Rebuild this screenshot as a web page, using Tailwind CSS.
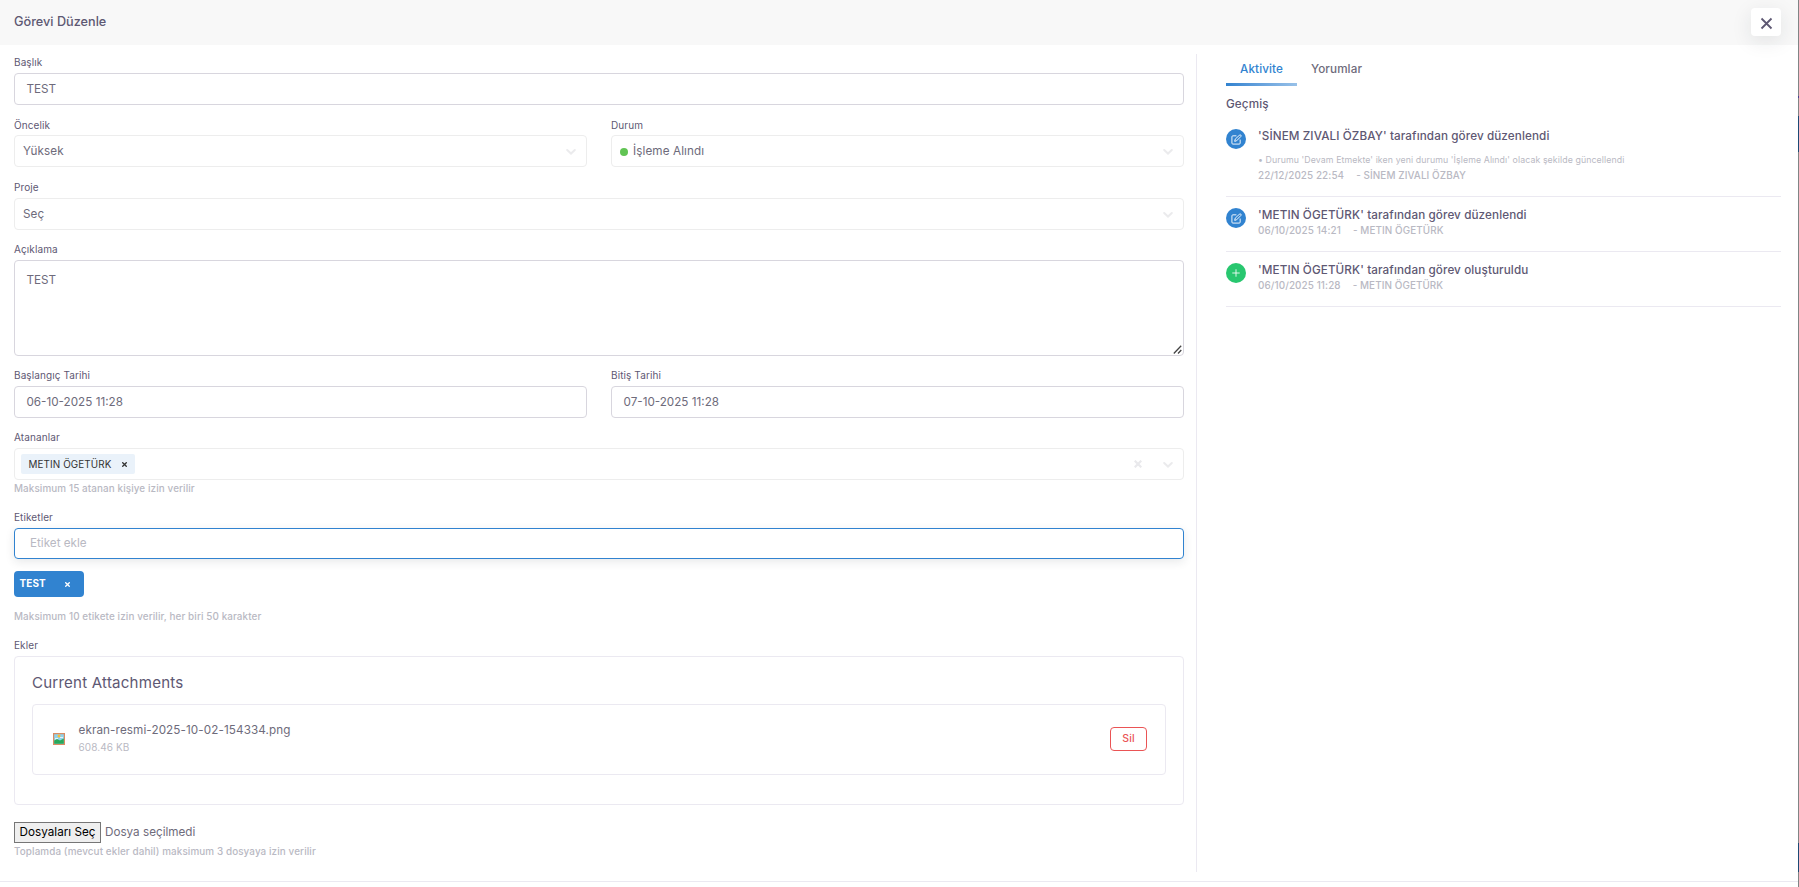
<!DOCTYPE html>
<html lang="tr">
    <head>
        <meta charset="UTF-8">
        <title>Görevi Düzenle</title>
        <script src="https://cdn.jsdelivr.net/npm/@tailwindcss/browser@4"></script>
    </head>
    <body class="flex h-[887px] overflow-hidden bg-white font-['Inter',sans-serif] text-[11.7px] tracking-[0.1px] text-[#6e6b7b]">

        <div id="modal" class="flex h-full flex-1 flex-col">

            <header class="flex h-[45px] shrink-0 items-start justify-between bg-[#f8f8f8] pl-3.5 pr-[17px]">
                <h5 class="pt-[11.5px] text-[12.7px] leading-5 font-medium tracking-normal text-[#5e5873]">Görevi Düzenle</h5>
                <button class="mt-2 flex h-7 w-[30px] items-center justify-center rounded-[4px] bg-white shadow-[0_5px_20px_0_rgba(34,41,47,0.1)]">
                    <svg class="mt-0.5 h-[13px] w-[13px]" viewBox="0 0 13 13" fill="none" stroke="#5e5873" stroke-width="1.8"><path d="M1.5 1.5l10 10M11.5 1.5l-10 10"/></svg>
                </button>
            </header>

            <main class="flex h-[837px] shrink-0 border-b border-[#ebe9f1] pt-[9px] pb-[9px]">

                <form id="form" class="w-[1197px] border-r border-[#ebe9f1] pr-3 pl-3.5">
                    <label class="block h-[19px] text-[10px] leading-[17px] text-[#5e5873]">Başlık</label>
                    <div class="flex h-8 items-center rounded-[4px] border border-[#d8d6de] px-[11.5px] pt-0.5 tracking-normal">TEST</div>

                    <div class="mt-3 grid grid-cols-2 gap-6">
                        <div>
                            <label class="block h-[18px] text-[10px] leading-[17px] text-[#5e5873]">Öncelik</label>
                            <div class="flex h-8 items-center justify-between rounded-[4px] border border-[#ededed] pt-0.5 pr-2.5 pl-2">
                                <span>Yüksek</span>
                                <svg class="-mt-px h-2.5 w-2.5" viewBox="0 0 10 10" fill="none" stroke="#ebebed" stroke-width="2" stroke-linecap="round"><path d="M1.200 3L5 6.600 8.800 3"/></svg>
                            </div>
                        </div>
                        <div>
                            <label class="block h-[18px] text-[10px] leading-[17px] text-[#5e5873]">Durum</label>
                            <div class="flex h-8 items-center rounded-[4px] border border-[#ededed] pt-0.5 pr-2.5 pl-2">
                                <span class="-mt-px mr-[5px] h-2 w-2 rounded-full bg-[#61c454]"></span>
                                <span class="flex-1">İşleme Alındı</span>
                                <svg class="-mt-px h-2.5 w-2.5" viewBox="0 0 10 10" fill="none" stroke="#ebebed" stroke-width="2" stroke-linecap="round"><path d="M1.200 3L5 6.600 8.800 3"/></svg>
                            </div>
                        </div>
                    </div>

                    <label class="mt-3 block h-[19px] text-[10px] leading-[17px] text-[#5e5873]">Proje</label>
                    <div class="flex h-8 items-center justify-between rounded-[4px] border border-[#ededed] pt-0.5 pr-2.5 pl-2">
                        <span>Seç</span>
                        <svg class="-mt-px h-2.5 w-2.5" viewBox="0 0 10 10" fill="none" stroke="#ebebed" stroke-width="2" stroke-linecap="round"><path d="M1.200 3L5 6.600 8.800 3"/></svg>
                    </div>

                    <label class="mt-3 block h-[18px] text-[10px] leading-[15px] text-[#5e5873]">Açıklama</label>
                    <div class="relative">
                        <textarea class="block h-24 w-full resize-none rounded-[4px] border border-[#d8d6de] px-[11.5px] py-[11px] leading-[17px] tracking-normal">TEST</textarea>
                        <svg class="absolute right-[2px] bottom-[2px] h-[9px] w-[9px]" viewBox="0 0 9 9" stroke="#444" stroke-width="1.3"><path d="M.8 8.500L8.200.8M5 8.500l3.300-3.500"/></svg>
                    </div>

                    <div class="mt-3 grid grid-cols-2 gap-6">
                        <div>
                            <label class="block h-[18px] text-[10px] leading-[15px] text-[#5e5873]">Başlangıç Tarihi</label>
                            <div class="flex h-8 items-center rounded-[4px] border border-[#d8d6de] px-[11.5px] pt-0.5 tracking-normal">06-10-2025 11:28</div>
                        </div>
                        <div>
                            <label class="block h-[18px] text-[10px] leading-[15px] text-[#5e5873]">Bitiş Tarihi</label>
                            <div class="flex h-8 items-center rounded-[4px] border border-[#d8d6de] px-[11.5px] pt-0.5 tracking-normal">07-10-2025 11:28</div>
                        </div>
                    </div>

                    <label class="mt-3 block h-[18px] text-[10px] leading-[15px] text-[#5e5873]">Atananlar</label>
                    <div class="flex h-8 items-center rounded-[4px] border border-[#ededed] pr-2.5 pl-1.5">
                        <div class="flex h-5 w-[114px] items-center rounded-[2px] bg-[#eaf2fa] pt-px pl-[7.5px] text-[9.9px] text-[#333]">
                            METIN ÖGETÜRK
                            <svg class="mb-px ml-[10.5px] h-[5px] w-[5px]" viewBox="0 0 5 5" stroke="#333" stroke-width="1.3"><path d="M.3.3l4.400 4.400M4.700.3L.3 4.700"/></svg>
                        </div>
                        <svg class="mr-[21px] ml-auto h-2 w-2" viewBox="0 0 8 8" stroke="#e9e9ec" stroke-width="2.2"><path d="M.7.7l6.600 6.600M7.300.7L.7 7.300"/></svg>
                        <svg class="mt-px h-2.5 w-2.5" viewBox="0 0 10 10" fill="none" stroke="#ebebed" stroke-width="2" stroke-linecap="round"><path d="M1.200 3L5 6.600 8.800 3"/></svg>
                    </div>
                    <small class="block h-[17px] text-[9.9px] leading-[17px] font-medium text-[#b9b9c3]">Maksimum 15 atanan kişiye izin verilir</small>

                    <label class="mt-3 block h-[19px] text-[10px] leading-[17px] text-[#5e5873]">Etiketler</label>
                    <div class="flex h-[31px] items-center rounded-[4px] border border-[#3183d0] px-[15px] pt-px tracking-normal text-[#b9b9c3] shadow-[0_3px_10px_0_rgba(34,41,47,0.1)]">Etiket ekle</div>
                    <div class="mt-3 flex h-[26px] w-[70px] items-center rounded-[4px] bg-[#3183d0] px-[5.5px] pb-px text-[10px] font-bold text-white">
                        TEST
                        <svg class="mt-px ml-[19.5px] h-[5px] w-[5px]" viewBox="0 0 5 5" stroke="#fff" stroke-width="1.3"><path d="M.3.3l4.400 4.400M4.700.3L.3 4.700"/></svg>
                    </div>
                    <small class="mt-[11px] block h-[17px] text-[9.9px] leading-[17px] font-medium text-[#b9b9c3]">Maksimum 10 etikete izin verilir, her biri 50 karakter</small>

                    <label class="mt-3 block h-[19px] text-[10px] leading-[17px] text-[#5e5873]">Ekler</label>
                    <div class="h-[149px] rounded-[4px] border border-[#ebe9f1] px-[17px]">
                        <h4 class="pt-4 text-[15.1px] leading-[19px] tracking-[0.2px] text-[#5e5873]">Current Attachments</h4>
                        <div class="mt-3 flex h-[71px] items-center rounded-[4px] border border-[#ebe9f1] pr-[18px] pl-5">
                            <svg class="-mt-px h-3 w-3" viewBox="0 0 12 12"><path fill="#d98c63" d="M0 0h12v12H0z"/><path fill="#8fd3ee" d="M1.200 1.200h9.600v9.600H1.200z"/><circle cx="6" cy="3" r="1.500" fill="#f6bd3a"/><path fill="#e5f4f8" d="M2 5h3v1.500H2zM7 4h3v1H7z"/><path fill="#29a95b" d="M1.200 10.800V7.400L4 6l3 1.500 3.800-2v5.300z"/></svg>
                            <div class="ml-[13.5px] flex-1">
                                <div class="-mt-0.5 leading-[18px]">ekran-resmi-2025-10-02-154334.png</div>
                                <small class="block text-[10px] leading-[17px] text-[#b9b9c3]">608.46 KB</small>
                            </div>
                            <button type="button" class="-mt-0.5 h-6 w-[37px] rounded-[4px] border border-[#ea5455] pt-px text-[10.5px] font-medium text-[#ea5455]">Sil</button>
                        </div>
                    </div>

                    <div class="mt-[17px] flex h-[21px] items-center tracking-normal">
                        <button type="button" class="h-[21px] w-[87px] border border-[#767676] bg-[#efefef] pt-px whitespace-nowrap text-black">Dosyaları Seç</button>
                        <span class="ml-1 pt-px">Dosya seçilmedi</span>
                    </div>
                    <small class="block h-[17px] text-[9.9px] leading-[17px] font-medium text-[#b9b9c3]">Toplamda (mevcut ekler dahil) maksimum 3 dosyaya izin verilir</small>
                </form>

                <aside class="flex-1 pr-[17px] pl-[29px]">
                    <nav class="flex leading-[30px] font-medium">
                        <a class="relative h-8 w-[71px] text-center text-[#3183d0]">Aktivite<span class="absolute bottom-0 left-0 h-[3px] w-full bg-linear-to-r from-[#3183d0] to-[#98c1e8]"></span></a>
                        <a class="ml-3.5">Yorumlar</a>
                    </nav>
                    <h6 class="mt-2 leading-5 font-medium text-[#5e5873]">Geçmiş</h6>

                    <ul>
                        <li class="mt-3 flex h-[71px] border-b border-[#ebe9f1]">
                            <span class="mt-[3px] flex h-5 w-5 items-center justify-center rounded-full bg-[#3183d0]">
                                <svg class="h-[11px] w-[11px]" viewBox="0 0 24 24" fill="none" stroke="#fff" stroke-width="2" stroke-linecap="round" stroke-linejoin="round"><path d="M11 4H4a2 2 0 0 0-2 2v14a2 2 0 0 0 2 2h14a2 2 0 0 0 2-2v-7"/><path d="M18.500 2.500a2.121 2.121 0 0 1 3 3L12 15l-4 1 1-4z"/></svg>
                            </span>
                            <div class="ml-3">
                                <h6 class="leading-5 font-medium text-[#5e5873]">'SİNEM ZIVALI ÖZBAY' tarafından görev düzenlendi</h6>
                                <p class="mt-1.5 text-[8.78px] leading-4 text-[#b9b9c3]">• Durumu 'Devam Etmekte' iken yeni durumu 'İşleme Alındı' olacak şekilde güncellendi</p>
                                <p class="-mt-px text-[9.87px] leading-4 font-medium text-[#b9b9c3]">22/12/2025 22:54<span class="ml-3">- SİNEM ZIVALI ÖZBAY</span></p>
                            </div>
                        </li>
                        <li class="flex h-[55px] border-b border-[#ebe9f1] pt-2">
                            <span class="mt-[3px] flex h-5 w-5 items-center justify-center rounded-full bg-[#3183d0]">
                                <svg class="h-[11px] w-[11px]" viewBox="0 0 24 24" fill="none" stroke="#fff" stroke-width="2" stroke-linecap="round" stroke-linejoin="round"><path d="M11 4H4a2 2 0 0 0-2 2v14a2 2 0 0 0 2 2h14a2 2 0 0 0 2-2v-7"/><path d="M18.500 2.500a2.121 2.121 0 0 1 3 3L12 15l-4 1 1-4z"/></svg>
                            </span>
                            <div class="ml-3">
                                <h6 class="leading-5 font-medium text-[#5e5873]">'METIN ÖGETÜRK' tarafından görev düzenlendi</h6>
                                <p class="-mt-[3px] text-[9.87px] leading-4 font-medium text-[#b9b9c3]">06/10/2025 14:21<span class="ml-3">- METIN ÖGETÜRK</span></p>
                            </div>
                        </li>
                        <li class="flex h-[55px] border-b border-[#ebe9f1] pt-2">
                            <span class="mt-[3px] flex h-5 w-5 items-center justify-center rounded-full bg-[#28c76f]">
                                <svg class="h-2.5 w-2.5" viewBox="0 0 24 24" fill="none" stroke="#fff" stroke-width="2" stroke-linecap="round"><path d="M12 4v16M4 12h16"/></svg>
                            </span>
                            <div class="ml-3">
                                <h6 class="leading-5 font-medium text-[#5e5873]">'METIN ÖGETÜRK' tarafından görev oluşturuldu</h6>
                                <p class="-mt-[3px] text-[9.87px] leading-4 font-medium text-[#b9b9c3]">06/10/2025 11:28<span class="ml-3">- METIN ÖGETÜRK</span></p>
                            </div>
                        </li>
                    </ul>
                </aside>
            </main>
        </div>

        <!-- page behind the modal -->
        <div class="flex h-full w-px flex-col bg-[#808585]">
            <div class="mt-24 h-0.5 bg-[#4b3f92]"></div>
            <div class="mt-[18px] h-9 bg-[#1b4a75]"></div>
            <div class="mt-[691px] h-[29px] bg-[#1b4a75]"></div>
        </div>

    </body>
</html>
